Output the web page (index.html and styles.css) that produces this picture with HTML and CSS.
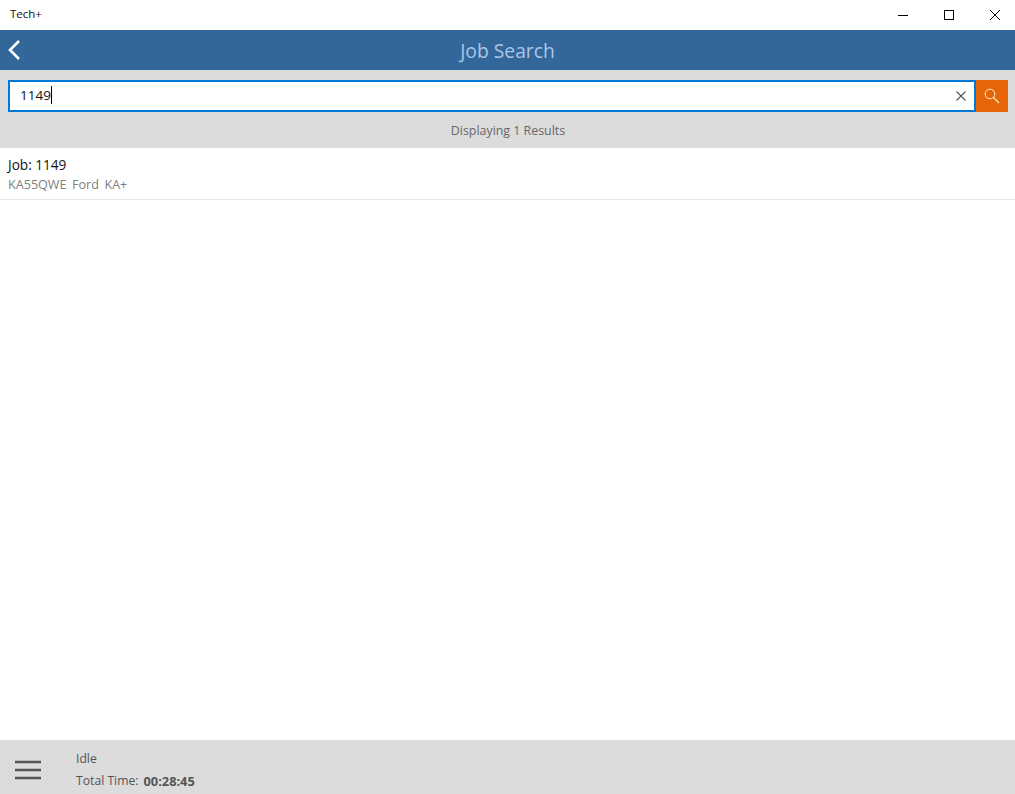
FILE: index.html
```html
<!DOCTYPE html>
<html lang="en">
<head>
<meta charset="utf-8">
<title>Tech+</title>
<link rel="stylesheet" href="styles.css">
</head>
<body>
<div class="app">
  <div class="titlebar">
    <span class="app-name">Tech+</span>
    <div class="win-controls">
      <span class="win-btn"><svg width="12" height="12" viewBox="0 0 12 12"><path d="M1 6.500h10" stroke="#000" fill="none"/></svg></span>
      <span class="win-btn"><svg width="12" height="12" viewBox="0 0 12 12"><rect x="1.500" y="1.500" width="9" height="9" stroke="#000" fill="none"/></svg></span>
      <span class="win-btn"><svg width="12" height="12" viewBox="0 0 12 12"><path d="M1 1l10 10M11 1L1 11" stroke="#000" fill="none"/></svg></span>
    </div>
  </div>
  <header class="header">
    <svg class="back" width="14" height="22" viewBox="0 0 14 22"><path d="M12 2L3 11l9 9" stroke="#fff" stroke-width="2.600" fill="none"/></svg>
    <h1 class="title">Job Search</h1>
  </header>
  <section class="search-panel">
    <div class="search-row">
      <div class="search-box">
        <span class="search-text">1149</span><span class="caret"></span>
        <svg class="clear" width="10" height="10" viewBox="0 0 10 10"><path d="M.5.5l9 9M9.500.5l-9 9" stroke="#555" stroke-width="1.100" fill="none"/></svg>
      </div>
      <button class="search-btn" type="button"><svg width="16" height="16" viewBox="0 0 16 16"><circle cx="6" cy="6" r="4.800" stroke="#fff" stroke-opacity=".85" fill="none"/><path d="M9.500 9.500l5.500 5.500" stroke="#fff" stroke-opacity=".85" stroke-width="1.300" fill="none"/></svg></button>
    </div>
    <div class="results-count">Displaying 1 Results</div>
  </section>
  <main class="results">
    <div class="result">
      <div class="job">Job: 1149</div>
      <div class="meta"><span>KA55QWE</span><span>Ford</span><span>KA+</span></div>
    </div>
  </main>
  <footer class="footer">
    <svg class="menu" width="26" height="20" viewBox="0 0 26 20"><path d="M0 2h26M0 10h26M0 18h26" stroke="#555" stroke-width="2.600" fill="none"/></svg>
    <div class="status">
      <div class="state">Idle</div>
      <div class="time"><span>Total Time:</span><strong>00:28:45</strong></div>
    </div>
  </footer>
</div>
</body>
</html>
```
FILE: styles.css
```css
* { box-sizing: border-box; }
html, body { margin: 0; height: 100%; overflow: hidden; }
body { font-family: "Open Sans", "Noto Sans", sans-serif; background: #fff; color: #000; }
.app { display: flex; flex-direction: column; height: 794px; overflow: hidden; }
.titlebar { height: 30px; flex: none; display: flex; justify-content: space-between; padding-left: 10px; }
.app-name { font-size: 11.500px; line-height: 28px; color: #111; }
.win-controls { display: flex; margin-right: -3px; }
.win-btn { width: 46px; height: 30px; display: flex; align-items: center; justify-content: center; }
.header { height: 40px; flex: none; background: #336699; position: relative; display: flex; align-items: center; justify-content: center; }
.back { position: absolute; left: 7px; top: 9px; }
.title { margin: 0; font-size: 19.300px; line-height: 42px; height: 40px; font-weight: 400; color: #a9c6e6; }
.search-panel { height: 78px; flex: none; background: #dcdcdc; padding: 10px 7px 0 8px; }
.search-row { display: flex; height: 32px; }
.search-box { flex: 1; border: 2px solid #0078d7; background: #fff; display: flex; align-items: center; padding: 0 0 2px 10px; position: relative; }
.search-text { font-size: 13.500px; color: #111; }
.caret { width: 1px; height: 18px; background: #000; }
.clear { position: absolute; right: 8px; top: 9px; }
.search-btn { width: 32px; border: 0; padding: 0; background: #e66506; display: flex; align-items: center; justify-content: center; }
.results-count { text-align: center; font-size: 12.400px; color: #666; margin-top: 10px; }
.results { flex: 1; }
.result { height: 52px; border-bottom: 1px solid #e6e6e6; padding: 7px 8px 0; }
.job { font-size: 13.600px; line-height: 20px; color: #111; }
.meta { font-size: 12.600px; line-height: 20px; color: #808080; display: flex; gap: 5.500px; }
.footer { height: 54px; flex: none; background: #dcdcdc; position: relative; padding-left: 76px; }
.menu { position: absolute; left: 15px; top: 20px; }
.status { font-size: 12.200px; color: #555; }
.state { line-height: 18px; padding-top: 10px; height: 28px; }
.time { display: flex; gap: 5px; line-height: 18px; margin-top: 4px; }
.time strong { font-size: 12.800px; font-weight: 700; color: #555; }
```
